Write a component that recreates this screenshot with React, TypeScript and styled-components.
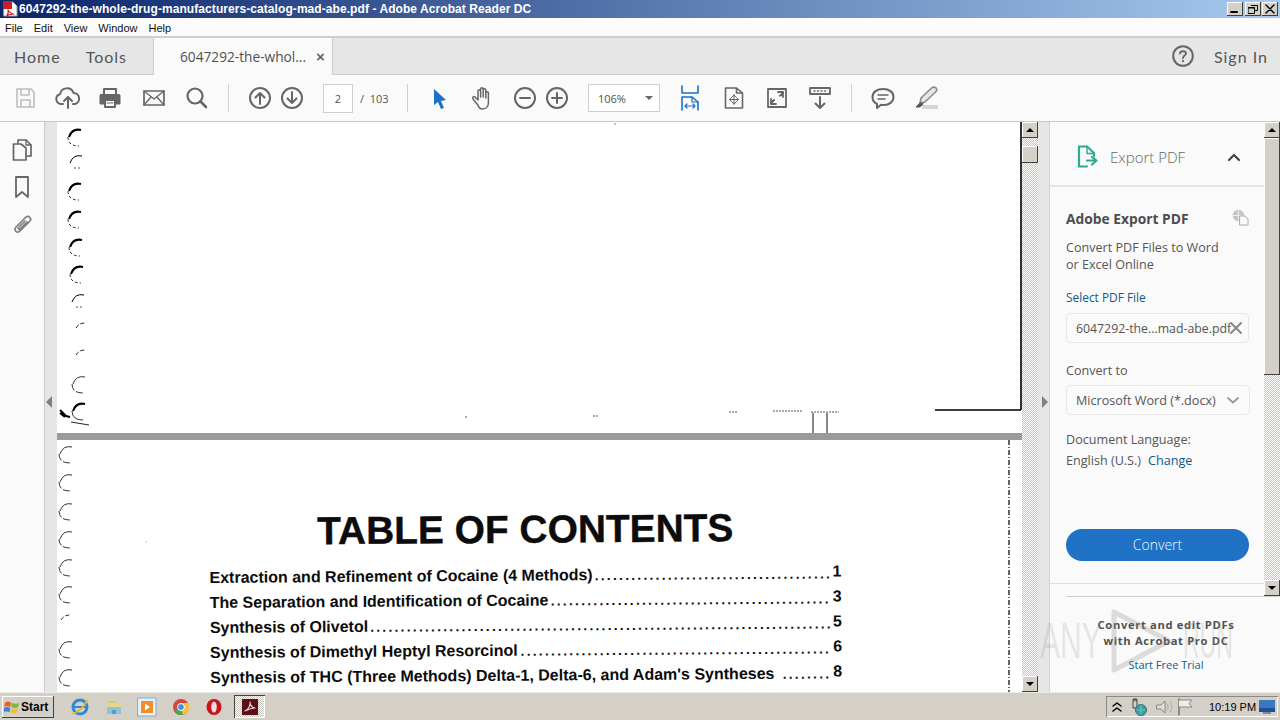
import React from 'react';
import styled, { createGlobalStyle } from 'styled-components';

const Global = createGlobalStyle`
  html, body { margin: 0; padding: 0; width: 1280px; height: 720px; overflow: hidden; background: #fafafa; }
  * { box-sizing: border-box; }
`;

const dither = 'repeating-conic-gradient(#c9c6be 0 25%, #fdfdfb 0 50%) 0 0 / 2px 2px';

const Win = styled.div`
  width: 1280px; height: 720px; display: flex; flex-direction: column; overflow: hidden; position: relative;
  font-family: "Open Sans", sans-serif; color: #505050;
`;
const TitleBar = styled.div`
  height: 18px; flex: none; display: flex; align-items: center; padding: 0 2px 0 3px;
  background: linear-gradient(90deg, #0a246a 0%, #a6caf0 100%);
`;
const TitleText = styled.div`
  flex: 1; font: bold 12px "Liberation Sans", sans-serif; letter-spacing: 0.07px; color: #fff; white-space: nowrap;
`;
const WinBtn = styled.div`
  width: 16px; height: 14px; margin-left: 1px; background: #d4d0c8; display: flex; align-items: center; justify-content: center;
  box-shadow: inset -1px -1px 0 #404040, inset 1px 1px 0 #fff;
  &:nth-of-type(3) { margin-left: 2px; }
`;
const MenuBar = styled.div`
  height: 20px; flex: none; display: flex; align-items: center; gap: 11px; padding: 2px 0 0 5px; background: #fdfcfc;
  font: 11px "Liberation Sans", sans-serif; color: #111; border-bottom: 2px solid #cfcfcf;
`;
const TabBar = styled.div`
  height: 37px; flex: none; display: flex; align-items: stretch; background: #e6e6e6; border-bottom: 1px solid #cdcdcd;
`;
const NavTabs = styled.div`
  width: 154px; display: flex; align-items: center; gap: 25px; padding-left: 14px; border-right: 1px solid #cdcdcd;
  font: 16px "Lato", sans-serif; letter-spacing: 1px; color: #555;
`;
const DocTab = styled.div`
  width: 179px; margin-bottom: -1px; background: #fafafa; border-right: 1px solid #cdcdcd; display: flex; align-items: center; padding-left: 26px;
  font: 13.7px "Open Sans", sans-serif; color: #505050; white-space: nowrap;
`;
const TabClose = styled.span`
  margin-left: 10px; font: bold 15px "Liberation Sans", sans-serif; color: #666;
`;
const TabRight = styled.div`
  flex: 1; display: flex; justify-content: flex-end; align-items: center; padding-right: 12px;
  font: 16px "Lato", sans-serif; letter-spacing: 1px; color: #555;
`;
const SignIn = styled.span`
  margin-left: 20px;
`;
const Toolbar = styled.div`
  height: 47px; flex: none; display: flex; align-items: center; padding-left: 9px; background: #fafafa; border-bottom: 1px solid #c8c8c8;
`;
const Tool = styled.div<{ $ml?: number }>`
  width: 32px; height: 32px; flex: none; display: flex; align-items: center; justify-content: center; margin-left: ${p => p.$ml ?? 0}px;
`;
const Divider = styled.div<{ $ml: number }>`
  width: 1px; height: 28px; flex: none; background: #cfcfcf; margin-left: ${p => p.$ml}px;
`;
const PageBox = styled.div`
  width: 30px; height: 29px; flex: none; margin-left: 15px; background: #fff; border: 1px solid #cfcfcf;
  display: flex; align-items: center; justify-content: center; font: 11px "Open Sans", sans-serif; color: #505050;
`;
const PageTotal = styled.div`
  width: 28px; margin-left: 7px; font: 11px "Open Sans", sans-serif; color: #555; white-space: nowrap;
`;
const ZoomBox = styled.div`
  width: 72px; height: 28px; flex: none; margin-left: 15px; background: #fff; border: 1px solid #cfcfcf; display: flex; align-items: center;
  padding-left: 9px; font: 11px "Open Sans", sans-serif; color: #505050; position: relative;
`;
const ZoomArrow = styled.span`
  margin-left: 19px; width: 0; height: 0; border-left: 4px solid transparent; border-right: 4px solid transparent; border-top: 4px solid #666;
`;
const Body = styled.div`
  flex: 1; min-height: 0; display: flex;
`;
const Rail = styled.div`
  width: 45px; flex: none; background: #fafafa; border-right: 1px solid #c9c9c9; display: flex; flex-direction: column; align-items: center; padding: 17px 0 0 0; gap: 15px;
`;
const Gutter = styled.div<{ $w: number }>`
  width: ${p => p.$w}px; flex: none; background: #e6e6e6; display: flex; align-items: center; justify-content: center; padding-bottom: 10px;
`;
const TriL = styled.span`
  width: 0; height: 0; border-top: 6px solid transparent; border-bottom: 6px solid transparent; border-right: 6px solid #808080; margin-right: 4px;
`;
const TriR = styled.span`
  width: 0; height: 0; border-top: 6px solid transparent; border-bottom: 6px solid transparent; border-left: 6px solid #808080; margin-left: 3px;
`;
const DocView = styled.div`
  width: 965px; flex: none; display: flex; flex-direction: column; background: #fff;
`;
const PageOne = styled.div`
  height: 311px; flex: none; position: relative; background: #fff;
`;
const PageGap = styled.div`
  height: 7px; flex: none; background: #9b9b9b;
`;
const PageTwo = styled.div`
  flex: 1; min-height: 0; position: relative; background: #fff; overflow: hidden; padding: 70px 0 0 152px;
`;
const Scan = styled.svg`
  position: absolute; left: 0; top: 0; width: 965px; pointer-events: none;
`;
const Toc = styled.div`
  width: 632px; transform: rotate(-0.42deg); transform-origin: 0 0; color: #0c0c0c; font-family: "Liberation Sans", sans-serif;
`;
const TocTitle = styled.div`
  margin: 0 0 11px 108px; font-weight: bold; font-size: 38.9px; line-height: 44px; white-space: nowrap; -webkit-text-stroke: 0.4px #0c0c0c;
`;
const TocRow = styled.div`
  height: 25px; display: flex; align-items: center; font-size: 16px; font-weight: bold; white-space: nowrap;
`;
const TocDots = styled.span`
  flex: 1; min-width: 0; text-align: right; letter-spacing: 2.2px; margin: 0 2px 0 2px; font-size: 14px;
`;
const TocNum = styled.span`
  flex: none; margin-top: -3px;
`;
const ScrollBar = styled.div`
  width: 16px; flex: none; display: flex; flex-direction: column; background: ${dither};
`;
const ScrollBtn = styled.div`
  width: 16px; height: 16px; flex: none; background: #d4d0c8; display: flex; align-items: center; justify-content: center;
  box-shadow: inset -1px -1px 0 #404040, inset 1px 1px 0 #fff;
`;
const Thumb = styled.div<{ $mt: number; $h: number }>`
  width: 16px; height: ${p => p.$h}px; margin-top: ${p => p.$mt}px; flex: none; margin-bottom: auto; background: #d4d0c8;
  box-shadow: inset -1px -1px 0 #404040, inset 1px 1px 0 #fff;
`;
const Up = styled.span`
  width: 0; height: 0; border-left: 4px solid transparent; border-right: 4px solid transparent; border-bottom: 4px solid #000;
`;
const Down = styled.span`
  width: 0; height: 0; border-left: 4px solid transparent; border-right: 4px solid transparent; border-top: 4px solid #000;
`;
const SidePanel = styled.div`
  width: 231px; flex: none; background: #fafafa; border-left: 1px solid #d2d2d2; display: flex; flex-direction: column;
`;
const PanelTop = styled.div`
  height: 474px; flex: none; display: flex;
`;
const PanelMain = styled.div`
  flex: 1; min-width: 0; display: flex; flex-direction: column;
`;
const PanelHead = styled.div`
  height: 65px; flex: none; display: flex; align-items: center; padding: 6px 0 0 27px; border-bottom: 2px solid #e4e4e4;
`;
const PanelHeadText = styled.div`
  margin-left: 11px; width: 117px; font: 300 15px "Open Sans", sans-serif; color: #666;
`;
const PanelBody = styled.div`
  height: 397px; flex: none; padding: 22px 15px 0 16px; border-bottom: 1px solid #dedede; font: 12.6px/17px "Open Sans", sans-serif; color: #555;
`;
const BlockTitle = styled.div`
  display: flex; justify-content: space-between; font: bold 13.8px/20px "Open Sans", sans-serif; color: #4d4d4d; margin-bottom: 10px;
`;
const Para = styled.div<{ $mt?: number }>`
  margin-top: ${p => p.$mt ?? 0}px; white-space: nowrap;
`;
const BlueLabel = styled.div`
  margin-top: 16px; font: 11.9px/17px "Open Sans", sans-serif; color: #0f5a8c;
`;
const Field = styled.div<{ $mt: number; $w: number; $fs: number }>`
  width: ${p => p.$w}px; height: 30px; margin-top: ${p => p.$mt}px; background: #fafafa; border: 1px solid #e8e8e8; border-radius: 4px;
  display: flex; align-items: center; padding-left: 9px; white-space: nowrap; font-size: ${p => p.$fs}px; color: #555; position: relative;
`;
const FieldIcon = styled.span<{ $r: number }>`
  position: absolute; right: ${p => p.$r}px; top: 7px; display: flex;
`;
const Link = styled.span`
  color: #0f5a8c; margin-left: 7px;
`;
const ConvertBtn = styled.div`
  width: 183px; height: 32px; margin-top: 60px; border-radius: 16px; background: #1f72c6; color: #f2f7fc;
  display: flex; align-items: center; justify-content: center; padding-bottom: 2px; font: 300 14px "Open Sans", sans-serif;
`;
const Promo = styled.div`
  margin-left: 16px; flex: 1; border-top: 1px solid #cfcfcf; display: flex; flex-direction: column; align-items: center; padding: 20px 14px 0 0;
`;
const PromoTitle = styled.div`
  font: bold 11.2px/16px "Open Sans", sans-serif; letter-spacing: 0.65px; color: #505050; text-align: center; white-space: nowrap;
`;
const PromoLink = styled.div`
  margin-top: 8px; font: 11px/16px "Open Sans", sans-serif; color: #0f5a8c;
`;
const Watermark = styled.div`
  position: absolute; left: 1040px; top: 608px; height: 66px; display: flex; align-items: center;
  font: 50px "Liberation Sans", sans-serif; color: rgba(140,140,140,0.2); pointer-events: none;
`;
const WmWord = styled.span<{ $w: number; $sx: number }>`
  width: ${p => p.$w}px; flex: none; transform: scaleX(${p => p.$sx}); transform-origin: 0 50%;
`;
const WmMark = styled.span`
  margin: 0 10px 0 8px; display: flex;
`;
const Taskbar = styled.div`
  height: 28px; flex: none; background: #d4d0c8; border-top: 1px solid #ece9e2; display: flex; align-items: center; padding: 0 2px 0 2px;
`;
const StartBtn = styled.div`
  width: 52px; height: 22px; flex: none; display: flex; align-items: center; padding-left: 2px; gap: 1px; background: #d4d0c8;
  font: bold 12px "Liberation Sans", sans-serif; color: #000; box-shadow: inset -1px -1px 0 #404040, inset 1px 1px 0 #fff;
`;
const TaskIcon = styled.div<{ $ml: number }>`
  width: 20px; height: 20px; flex: none; margin-left: ${p => p.$ml}px; display: flex; align-items: center; justify-content: center;
`;
const ActiveTask = styled.div`
  width: 31px; height: 23px; flex: none; margin-left: 10px; display: flex; align-items: center; justify-content: center; background: ${dither};
  box-shadow: inset 1px 1px 0 #404040, inset -1px -1px 0 #fff;
`;
const Tray = styled.div`
  margin-left: auto; width: 172px; height: 21px; flex: none; display: flex; align-items: center; padding: 0 1px 0 5px;
  box-shadow: inset 1px 1px 0 #8c8a84, inset -1px -1px 0 #fff; font: 11px "Liberation Sans", sans-serif; color: #000;
`;
const Clock = styled.span`
  margin: 0 auto 0 14px; white-space: nowrap;
`;

const I = ({ w = 24, h = 24, vb, children }: { w?: number; h?: number; vb?: string; children: React.ReactNode }) => (
  <svg width={w} height={h} viewBox={vb ?? `0 0 ${w} ${h}`} fill="none" strokeLinecap="round" strokeLinejoin="round">{children}</svg>
);
const G = '#666';

const rings1: [number, number, number][] = [
  [10, 6, 1], [11, 32, 0], [10, 60, 1], [10, 88, 1], [11, 116, 1], [12, 143, 1], [13, 171, 0], [16, 198, 2], [16, 225, 2], [14, 253, 3], [14, 280, 4],
];
const rings2: [number, number, number][] = [
  [1, 5, 3], [1, 33, 3], [1, 62, 3], [1, 90, 3], [1, 118, 3], [1, 145, 3], [1, 172, 2], [1, 200, 3], [1, 228, 3],
];
const Ring = ({ x, y, k }: { x: number; y: number; k: number }) => {
  if (k === 2) return <path d={`M${x + 3} ${y + 8}Q${x + 6} ${y + 3} ${x + 12} ${y + 3}`} stroke="#222" strokeWidth="1" strokeDasharray="4 2" />;
  return (
    <g>
      <path d={`M${x + 14} ${y + 2}Q${x + 5} ${y} ${x + 2} ${y + 9}`} stroke={k === 3 ? '#333' : '#000'} strokeWidth={k === 1 || k === 4 ? 2 : 1} />
      {k !== 0 ? (
        <path d={`M${x + 1} ${y + 9}Q${x + 1} ${y + 18} ${x + 12} ${y + 18}`} stroke="#333" strokeWidth="1" strokeDasharray={k === 1 ? '3 2' : k === 3 ? '7 2' : undefined} />
      ) : (
        <path d={`M${x + 6} ${y + 14}L${x + 12} ${y + 14}`} stroke="#555" strokeWidth="1" strokeDasharray="2 2" />
      )}
    </g>
  );
};

const SaveIc = () => <I vb="0 0 24 24"><path d="M4 3h14l3 3v15H4z M8 3v6h8V3 M8 21v-7h9v7" stroke="#bdbdbd" strokeWidth="1.6" /></I>;
const UploadIc = () => <I w={26} h={24}><path d="M8 18H6a5 5 0 0 1-1-9.8A7 7 0 0 1 18.5 7 5.6 5.6 0 0 1 20 18h-2" stroke={G} strokeWidth="2" /><path d="M13 22V11M9 15l4-4 4 4" stroke={G} strokeWidth="2" /></I>;
const PrintIc = () => <I><path d="M6 8V3h12v5" stroke={G} strokeWidth="2" /><path d="M3 8.500h18a1 1 0 0 1 1 1V18h-4v-4H6v4H2V9.500a1 1 0 0 1 1-1z" fill={G} stroke={G} /><path d="M7 14h10v7H7z" stroke={G} strokeWidth="2" /><path d="M9 17h6" stroke={G} /></I>;
const MailIc = () => <I><path d="M2 5h20v14H2z" stroke={G} strokeWidth="1.700" /><path d="M2 5l10 8 10-8M2 19l7-8M22 19l-7-8" stroke={G} strokeWidth="1.300" /></I>;
const SearchIc = () => <I><circle cx="10" cy="10" r="7.500" stroke={G} strokeWidth="2.200" /><path d="M15.500 15.500l5.500 5.500" stroke={G} strokeWidth="2.600" /></I>;
const ArrowC = ({ down }: { down?: boolean }) => <I><circle cx="12" cy="12" r="10" stroke={G} strokeWidth="2" />{down ? <path d="M12 6v11M7.500 12.500L12 17l4.500-4.500" stroke={G} strokeWidth="2" /> : <path d="M12 18V7M7.500 11.500L12 7l4.500 4.500" stroke={G} strokeWidth="2" />}</I>;
const PointerIc = () => <I><path d="M7 3l12 11-5 1 3 7-3 1-3-7-4 3z" fill="#1b72c8" /></I>;
const HandIc = () => <I w={26} h={26}><path d="M8 19l-4-5c-1-2 1-3 2-2l3 3V6a1.300 1.300 0 0 1 2.600 0V12V4a1.300 1.300 0 0 1 2.600 0v8V5a1.300 1.300 0 0 1 2.600 0v8V8a1.300 1.300 0 0 1 2.600 0v10c0 4-3 6-6 6-3 0-4-2-5-5z" stroke={G} strokeWidth="1.500" /></I>;
const MinusIc = () => <I><circle cx="12" cy="12" r="10" stroke={G} strokeWidth="2" /><path d="M7 12h10" stroke={G} strokeWidth="2" /></I>;
const PlusIc = () => <I><circle cx="12" cy="12" r="10" stroke={G} strokeWidth="2" /><path d="M7 12h10M12 7v10" stroke={G} strokeWidth="2" /></I>;
const FitWidthIc = () => <I w={20} h={26}><path d="M2 1v7h16V1" stroke="#1b72c8" strokeWidth="1.600" /><path d="M2 25V12h10l6 5v8" stroke="#1b72c8" strokeWidth="1.600" /><path d="M12 12v5h6M5 21h10M5 21l2-2M5 21l2 2M15 21l-2-2M15 21l-2 2" stroke="#1b72c8" strokeWidth="1.200" /></I>;
const PageMoveIc = () => <I w={20} h={24}><path d="M1.500 2h11l6 5v15h-17z M12.500 2v5h6" stroke={G} strokeWidth="1.600" /><path d="M10 9v9M5.500 13.500h9M10 9l-2 2M10 9l2 2M10 18l-2-2M10 18l2-2M5.500 13.500l2-2M5.500 13.500l2 2M14.500 13.500l-2-2M14.500 13.500l-2 2" stroke={G} /></I>;
const FullIc = () => <I w={20} h={20}><path d="M1 1h18v18H1z" stroke={G} strokeWidth="1.800" /><path d="M4 16l4-4-1.500-0.500L4 14zM16 4l-4 4 2 0 2-2z" fill={G} stroke={G} /><path d="M11 4h5v5M4 11v5h5" stroke={G} strokeWidth="1.800" /></I>;
const ReadIc = () => <I w={22} h={24}><path d="M1 2h20v6H1z" stroke={G} strokeWidth="1.800" /><path d="M5 5h1M8.500 5h1M12 5h1M15.500 5h1" stroke={G} strokeWidth="1.500" /><path d="M11 11v11M6.500 17.500L11 22l4.500-4.500" stroke={G} strokeWidth="2" /></I>;
const CommentIc = () => <I w={24} h={24}><path d="M12 3c6 0 10.500 3 10.500 8s-4.500 8-9.500 8c-1 0-2 0-3-.3L6 22v-4C3 16.500 1.500 14 1.500 11 1.500 6 6 3 12 3z" stroke={G} strokeWidth="2" /><path d="M7 9h10M7 13h7" stroke={G} strokeWidth="1.500" /></I>;
const SignIc = () => <I w={26} h={24}><path d="M23 2c-2-1.500-3.500-1-5 .5L8 12l-1 5 5-1 10.500-10c1.500-1.500 2-2.500.5-4z" fill="#e6e6e6" stroke="#8a8a8a" strokeWidth="1.600" /><path d="M7 17l-4 4h4l3-3z" fill="#555" stroke="#555" /><path d="M9 19h16v4H9z" fill="#d4d4d4" /></I>;
const HelpIc = () => <I w={22} h={22}><circle cx="11" cy="11" r="9.800" stroke={G} strokeWidth="2" /><path d="M8 8.500C8 5.500 14 5.500 14 8.500c0 2-3 2-3 4.500" stroke={G} strokeWidth="1.800" /><path d="M11 15.800v.4" stroke={G} strokeWidth="2" /></I>;
const CopyIc = () => <I w={20} h={22}><path d="M6 4V1h8l5 5v11h-5" stroke={G} strokeWidth="1.700" /><path d="M14 1v5h5" stroke={G} strokeWidth="1.300" /><path d="M1.500 5H9l5 4v12H1.500z" fill="#fafafa" stroke={G} strokeWidth="1.700" /></I>;
const BookmarkIc = () => <I w={14} h={22}><path d="M1 1h12v20l-6-5-6 5z" stroke={G} strokeWidth="1.800" /></I>;
const ClipIc = () => <I w={22} h={22}><path d="M14 5L5 14c-3 3 1 7 4 4l10-10c2-2-1-6-4-4L5 14M16 9l-7 7c-1 1-2.500-.5-1.500-1.500L14 8" stroke="#808080" strokeWidth="1.700" /></I>;
const ExportIc = () => <I w={22} h={23}><path d="M10 21.500H2V1.500h8l7 6.500v3" stroke="#2eaa90" strokeWidth="2.200" /><path d="M10 2v6.500h7" stroke="#2eaa90" strokeWidth="1.400" /><path d="M10 15.500h8M15 12l4.500 3.500L15 19.500" stroke="#2eaa90" strokeWidth="2.200" /></I>;
const CloudDocIc = () => <I w={17} h={17}><circle cx="6.500" cy="6.500" r="5.800" fill="#c5c5c5" /><path d="M1 6.500h11M6.500 1v11" stroke="#eee" /><path d="M8 7h5l3 3v6H8z" fill="#fafafa" stroke="#aaa" /></I>;

const WinLogo = () => <I w={16} h={14} vb="0 0 18 16"><path d="M1 3c3-2 5-1 7 0L7 8C5 7 3 6.500 0 8z" fill="#e8622c" /><path d="M9 3c2 1 5 2 8 0l-1 5c-3 2-5 1-8 0z" fill="#7db642" /><path d="M0 9c3-1.500 5-1 7 0l-1 5c-2-1-4-1.500-7 0z" fill="#3a85d8" /><path d="M8 9c2 1 5 2 8 0l-1 5c-3 2-6 1-8 0z" fill="#f0c030" /></I>;
const AppPdf = () => <I w={16} h={16}><path d="M1 1h9l4 4v10H1z" fill="#fff" stroke="#999" /><path d="M0 0h9v8H0z" fill="#c8202a" /><path d="M5 9c2 3 4 4 6 4-2 0-5 0-7 2 1-2 2-4 1-6z" fill="none" stroke="#c8202a" strokeWidth="1.200" /></I>;

const App = () => (
  <Win>
    <Global />
    <TitleBar>
      <AppPdf />
      <TitleText>6047292-the-whole-drug-manufacturers-catalog-mad-abe.pdf - Adobe Acrobat Reader DC</TitleText>
      <WinBtn><I w={10} h={10}><path d="M1 8h6" stroke="#000" strokeWidth="2" /></I></WinBtn>
      <WinBtn><I w={10} h={10}><path d="M3.500 1.500h6v5h-2M.5 3.500h6v6h-6z" stroke="#000" /><path d="M.5 4h6" stroke="#000" /></I></WinBtn>
      <WinBtn><I w={10} h={10}><path d="M1 1l8 8M9 1l-8 8" stroke="#000" strokeWidth="1.400" /></I></WinBtn>
    </TitleBar>
    <MenuBar><span>File</span><span>Edit</span><span>View</span><span>Window</span><span>Help</span></MenuBar>
    <TabBar>
      <NavTabs><span>Home</span><span>Tools</span></NavTabs>
      <DocTab>6047292-the-whol...<TabClose>×</TabClose></DocTab>
      <TabRight><HelpIc /><SignIn>Sign In</SignIn></TabRight>
    </TabBar>
    <Toolbar>
      <Tool><SaveIc /></Tool>
      <Tool $ml={11}><UploadIc /></Tool>
      <Tool $ml={10}><PrintIc /></Tool>
      <Tool $ml={12}><MailIc /></Tool>
      <Tool $ml={11}><SearchIc /></Tool>
      <Divider $ml={15} />
      <Tool $ml={15}><ArrowC /></Tool>
      <Tool><ArrowC down /></Tool>
      <PageBox>2</PageBox>
      <PageTotal>/&nbsp; 103</PageTotal>
      <Divider $ml={19} />
      <Tool $ml={15}><PointerIc /></Tool>
      <Tool $ml={11}><HandIc /></Tool>
      <Tool $ml={11}><MinusIc /></Tool>
      <Tool><PlusIc /></Tool>
      <ZoomBox>106%<ZoomArrow /></ZoomBox>
      <Tool $ml={14}><FitWidthIc /></Tool>
      <Tool $ml={12}><PageMoveIc /></Tool>
      <Tool $ml={11}><FullIc /></Tool>
      <Tool $ml={11}><ReadIc /></Tool>
      <Divider $ml={15} />
      <Tool $ml={15}><CommentIc /></Tool>
      <Tool $ml={11}><SignIc /></Tool>
    </Toolbar>
    <Body>
      <Rail><CopyIc /><BookmarkIc /><ClipIc /></Rail>
      <Gutter $w={12}><TriL /></Gutter>
      <DocView>
        <PageOne>
          <Scan height="311" viewBox="0 0 965 311" fill="none">
            {rings1.map(([x, y, k]) => <Ring key={y} x={x} y={y} k={k} />)}
            <path d="M3 288l6 6 4 1M3 291l5 4" stroke="#000" strokeWidth="2" />
            <path d="M14 300l18 3" stroke="#222" />
            <path d="M964 0v288" stroke="#000" strokeWidth="1.600" />
            <path d="M964 288h-6M878 288h80" stroke="#000" strokeWidth="1.300" />
            <path d="M756 291v20M770 291v20" stroke="#111" />
            <path d="M672 290h8M716 289h30M754 290h28M408 295h2M536 294h5" stroke="#555" strokeDasharray="2 1" />
            <path d="M557 2h2" stroke="#888" />
          </Scan>
        </PageOne>
        <PageGap />
        <PageTwo>
          <Scan height="252" viewBox="0 0 965 252" fill="none">
            {rings2.map(([x, y, k]) => <Ring key={y} x={x} y={y} k={k} />)}
            <path d="M952 0v252" stroke="#111" strokeWidth="1.300" strokeDasharray="5 2 1 2" />
            <path d="M89 102h1" stroke="#888" />
          </Scan>
          <Toc>
            <TocTitle>TABLE OF CONTENTS</TocTitle>
            <TocRow>Extraction and Refinement of Cocaine (4 Methods)<TocDots>{'.'.repeat(39)}</TocDots><TocNum>1</TocNum></TocRow>
            <TocRow>The Separation and Identification of Cocaine<TocDots>{'.'.repeat(46)}</TocDots><TocNum>3</TocNum></TocRow>
            <TocRow>Synthesis of Olivetol<TocDots>{'.'.repeat(76)}</TocDots><TocNum>5</TocNum></TocRow>
            <TocRow>Synthesis of Dimethyl Heptyl Resorcinol<TocDots>{'.'.repeat(51)}</TocDots><TocNum>6</TocNum></TocRow>
            <TocRow>Synthesis of THC (Three Methods) Delta-1, Delta-6, and Adam's Syntheses<TocDots>{'.'.repeat(8)}</TocDots><TocNum>8</TocNum></TocRow>
          </Toc>
        </PageTwo>
      </DocView>
      <ScrollBar>
        <ScrollBtn><Up /></ScrollBtn>
        <Thumb $mt={8} $h={17} />
        <ScrollBtn><Down /></ScrollBtn>
      </ScrollBar>
      <Gutter $w={11}><TriR /></Gutter>
      <SidePanel>
        <PanelTop>
          <PanelMain>
            <PanelHead>
              <ExportIc />
              <PanelHeadText>Export PDF</PanelHeadText>
              <I w={14} h={10}><path d="M2 8l5-5 5 5" stroke="#444" strokeWidth="2.200" /></I>
            </PanelHead>
            <PanelBody>
              <BlockTitle>Adobe Export PDF<CloudDocIc /></BlockTitle>
              <Para>Convert PDF Files to Word</Para>
              <Para>or Excel Online</Para>
              <BlueLabel>Select PDF File</BlueLabel>
              <Field $mt={7} $w={183} $fs={12.3}>6047292-the...mad-abe.pdf<FieldIcon $r={5}><I w={14} h={14}><path d="M2 2l10 10M12 2L2 12" stroke="#888" strokeWidth="2" /></I></FieldIcon></Field>
              <Para $mt={19}>Convert to</Para>
              <Field $mt={6} $w={184} $fs={12.6}>Microsoft Word (*.docx)<FieldIcon $r={9}><I w={14} h={14}><path d="M2 5l5 4.500L12 5" stroke="#999" strokeWidth="1.800" /></I></FieldIcon></Field>
              <Para $mt={16}>Document Language:</Para>
              <Para $mt={4}>English (U.S.)<Link>Change</Link></Para>
              <ConvertBtn>Convert</ConvertBtn>
            </PanelBody>
          </PanelMain>
          <ScrollBar>
            <ScrollBtn><Up /></ScrollBtn>
            <Thumb $mt={0} $h={237} />
            <ScrollBtn><Down /></ScrollBtn>
          </ScrollBar>
        </PanelTop>
        <Promo>
          <PromoTitle>Convert and edit PDFs<br />with Acrobat Pro DC</PromoTitle>
          <PromoLink>Start Free Trial</PromoLink>
        </Promo>
      </SidePanel>
    </Body>
    <Watermark>
      <WmWord $w={62} $sx={0.6}>ANY</WmWord>
      <WmMark><I w={63} h={64}><path d="M4 3l55 29L4 61z" stroke="rgba(140,140,140,0.28)" strokeWidth="5" /></I></WmMark>
      <WmWord $w={50} $sx={0.46}>RUN</WmWord>
    </Watermark>
    <Taskbar>
      <StartBtn><WinLogo />Start</StartBtn>
      <TaskIcon $ml={16}><I w={18} h={18}><circle cx="9" cy="9" r="7" stroke="#2d8ad8" strokeWidth="3" /><path d="M3 9h12" stroke="#2d8ad8" strokeWidth="2" /><path d="M2 15C6 15 14 9 16 2" stroke="#e8b830" strokeWidth="1.500" /></I></TaskIcon>
      <TaskIcon $ml={14}><I w={18} h={18}><path d="M2 5h14v11H2z" fill="#e6d58a" /><path d="M2 9h14v7H2z" fill="#8fc4d8" /><path d="M7 16v-4h4v4" fill="#5a9ec4" /><path d="M3 3h7v2H3z" fill="#d8c878" /></I></TaskIcon>
      <TaskIcon $ml={13}><I w={20} h={20}><path d="M1 1h18v18H1z" fill="#e8f0f8" stroke="#7ab0d8" /><path d="M4 4h12v12H4z" fill="#ee8f2c" /><path d="M8 6.500l5 3.500-5 3.500z" fill="#fff" /></I></TaskIcon>
      <TaskIcon $ml={14}><I w={18} h={18}><circle cx="9" cy="9" r="8" fill="#d8453a" /><path d="M9 9L2 13a8 8 0 0 0 9 3.700z" fill="#4aa54f" /><path d="M9 5h7.500a8 8 0 0 1-6 11.500z" fill="#f0c63a" /><circle cx="9" cy="9" r="3.500" fill="#4a8be0" stroke="#fff" /></I></TaskIcon>
      <TaskIcon $ml={13}><I w={16} h={18}><ellipse cx="8" cy="9" rx="7.500" ry="8" fill="#c4161c" /><ellipse cx="8" cy="9" rx="2.800" ry="5.500" fill="#f6dcdc" /></I></TaskIcon>
      <ActiveTask><I w={16} h={16}><path d="M0 0h16v16H0z" fill="#5c1016" /><path d="M3 12c3-1 6-6 5-9 0 4 3 6 5 6-3 0-6 1-10 3z" stroke="#f0d8d8" strokeWidth="1.100" /></I></ActiveTask>
      <Tray>
        <I w={12} h={14}><path d="M2 6l4-3 4 3M2 11l4-3 4 3" stroke="#000" strokeWidth="1.500" /></I>
        <TaskIcon $ml={6}><I w={18} h={18}><path d="M3 2v8h4V2zM4 0v3M6 0v3" stroke="#444" /><circle cx="11" cy="12" r="5.500" fill="#3d9cb0" stroke="#2a6f80" /><path d="M7 12h8M11 7v9" stroke="#6fcf7f" /></I></TaskIcon>
        <TaskIcon $ml={6}><I w={18} h={16}><path d="M1 6h4l4-4v12l-4-4H1z" stroke="#888" fill="#ddd" /><path d="M11 5c1.500 1.500 1.500 4.500 0 6M14 3c2.500 3 2.500 7 0 10" stroke="#aaa" /></I></TaskIcon>
        <TaskIcon $ml={0}><I w={18} h={18}><path d="M3 1v16" stroke="#666" strokeWidth="1.300" /><path d="M3 2h13l-3 3.500L16 9H3" stroke="#888" fill="#eee" /></I></TaskIcon>
        <Clock>10:19 PM</Clock>
        <TaskIcon $ml={0}><I w={16} h={14}><path d="M0 0h16v12H0z" fill="#3b78c4" /><path d="M0 8h16v4H0z" fill="#1f4f96" /><path d="M4 12h8v2H4z" fill="#888" /></I></TaskIcon>
      </Tray>
    </Taskbar>
  </Win>
);

export default App;
